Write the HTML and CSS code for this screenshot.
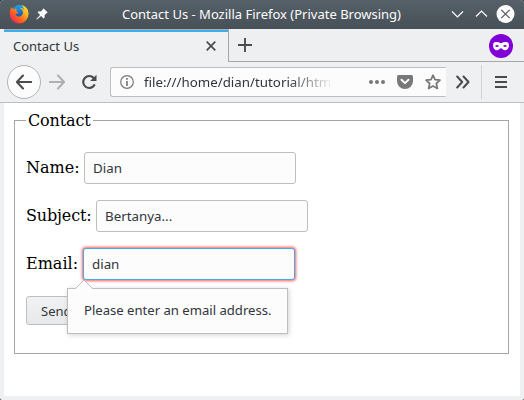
FILE: index.html
```html
<!DOCTYPE html>
<html lang="en">
<head>
<meta charset="utf-8">
<title>Contact Us</title>
<link rel="stylesheet" href="styles.css">
</head>
<body>
<div class="window">
  <header class="titlebar">
    <svg class="firefox" width="20" height="20" viewBox="0 0 20 20">
      <defs>
        <linearGradient id="flame" x1="1" y1="0" x2="0.1" y2="0.9">
          <stop offset="0" stop-color="#fff044"/><stop offset=".35" stop-color="#ffb21c"/><stop offset=".65" stop-color="#ff651f"/><stop offset="1" stop-color="#e9205f"/>
        </linearGradient>
        <linearGradient id="globe" x1="0" y1="0" x2="0" y2="1">
          <stop offset="0" stop-color="#16a6ee"/><stop offset="1" stop-color="#283b95"/>
        </linearGradient>
      </defs>
      <circle cx="10.3" cy="8.5" r="7.6" fill="url(#globe)"/>
      <path d="M2.4 3.2 4.3 5 6.6 4.7 8 5.6 7.2 7.7 9.5 8 8.4 9.4 6.4 10c.7 2.7 4.4 3.5 6.6 1.2 1.4-1.5 1.4-3.5.2-5.1l-2.5-2.4c1.8-.2 3.4.8 4.4 2.1-.2-1.8-1.3-3.5-2.8-4.5C16.500 1.800 19.500 5 19.500 9.800A9.400 9.400 0 0 1 .7 10.500C.6 8 1.200 5 2.400 3.200Z" fill="url(#flame)"/>
    </svg>
    <svg class="pin" width="12" height="12" viewBox="0 0 12 12"><path fill="#fcfcfc" d="M7.400.2 11.800 4.600 10.700 5 8.500 7.200 8.700 9.400 7.700 10.400 5.100 7.900 1 11.600.3 11 4.100 6.900 1.600 4.300 2.600 3.300 4.800 3.500 7 1.300Z"/></svg>
    <h1 class="caption">Contact Us - Mozilla Firefox (Private Browsing)</h1>
    <svg class="controls" width="68" height="20" viewBox="0 0 68 20">
      <path d="m5 7.500 5.500 5.500L16 7.500M29 12.500l5.500-5.500 5.500 5.500" fill="none" stroke="#fcfcfc" stroke-width="1.200"/>
      <circle cx="58.500" cy="10" r="9" fill="#fcfcfc"/>
      <path d="m54.300 5.800 8.400 8.400m0-8.400-8.400 8.400" stroke="#4b545c" stroke-width="1.200"/>
    </svg>
  </header>
  <div class="tabs">
    <div class="tab"><span>Contact Us</span>
      <svg width="10" height="10" viewBox="0 0 10 10"><path d="m.7.7 8.600 8.600m0-8.600L.7 9.300" stroke="#4a4b4d" stroke-width="1.700"/></svg>
    </div>
    <div class="tab-rest">
      <svg width="14" height="14" viewBox="0 0 14 14"><path d="M7 0v14M0 7h14" stroke="#4a4b4d" stroke-width="1.900"/></svg>
      <svg class="mask" width="24" height="24" viewBox="0 0 24 24"><circle cx="12" cy="12" r="12" fill="#8000d7"/><path fill="#fff" fill-rule="evenodd" d="M4.200 10C4.800 7.500 8.500 7.700 12 9.300c3.500-1.600 7.200-1.800 7.800.7.600 3.800-1.300 6.300-3.600 6.300-2.200 0-3-2-4.200-2s-2 2-4.200 2C5.500 16.300 3.600 13.800 4.200 10ZM6 12q2 2.200 4 0-2-2.200-4 0ZM14 12q2 2.200 4 0-2-2.200-4 0Z"/></svg>
    </div>
  </div>
  <nav class="toolbar">
    <div class="back"><svg width="16" height="16" viewBox="0 0 16 16"><path d="M7 1.500.9 8 7 14.500M1 8h14.200" fill="none" stroke="#4a4b4d" stroke-width="2" stroke-linecap="round" stroke-linejoin="round"/></svg></div>
    <svg class="forward" width="16" height="16" viewBox="0 0 16 16"><path d="M9 1.500 15.100 8 9 14.500M15 8H.8" fill="none" stroke="#afb0b2" stroke-width="2" stroke-linecap="round" stroke-linejoin="round"/></svg>
    <svg class="reload" width="16" height="16" viewBox="0 0 16 16"><path d="M13.300 11.200A6 6 0 1 1 12.700 4" fill="none" stroke="#4a4b4d" stroke-width="2.200" stroke-linecap="round"/><path d="M15.500.7V7H9.200Z" fill="#4a4b4d"/></svg>
    <div class="urlbar">
      <svg width="14" height="14" viewBox="0 0 14 14"><circle cx="7" cy="7" r="6.300" fill="none" stroke="#77787a" stroke-width="1.200"/><path d="M7 3v1.800M7 6v5" stroke="#77787a" stroke-width="1.700"/></svg>
      <span class="url">file:///home/dian/tutorial/html</span>
      <svg class="dots" width="16" height="4" viewBox="0 0 16 4"><g fill="#77787a"><circle cx="2" cy="2" r="2"/><circle cx="8" cy="2" r="2"/><circle cx="14" cy="2" r="2"/></g></svg>
      <svg class="pocket" width="16" height="14" viewBox="0 0 16 14"><path d="M1.500 0h13Q16 0 16 1.500V6A8 8 0 0 1 0 6V1.500Q0 0 1.500 0Z" fill="#77787a"/><path d="m4.500 4.700 3.500 3.400 3.500-3.400" fill="none" stroke="#fcfcfc" stroke-width="2" stroke-linecap="round" stroke-linejoin="round"/></svg>
      <svg class="star" width="16" height="16" viewBox="0 0 16 16"><path d="m8 1.200 2 4.500 5 .5-3.700 3.300 1.100 5L8 12l-4.400 2.500 1.100-5L1 6.200l5-.5Z" fill="none" stroke="#77787a" stroke-width="1.700" stroke-linejoin="round"/></svg>
    </div>
    <svg class="more" width="14" height="14" viewBox="0 0 14 14"><path d="m1.200 1.500 5 5.500-5 5.500m6.300-11 5 5.500-5 5.500" fill="none" stroke="#4a4b4d" stroke-width="2" stroke-linecap="round" stroke-linejoin="round"/></svg>
    <div class="menu"><svg width="12" height="12" viewBox="0 0 12 12"><path d="M0 1h12M0 6h12M0 11h12" stroke="#4a4b4d" stroke-width="2"/></svg></div>
  </nav>
  <main class="page">
    <fieldset class="contact">
      <legend>Contact</legend>
      <div class="field name"><label for="name">Name:</label><input id="name" type="text" value="Dian"></div>
      <div class="field subject"><label for="subject">Subject:</label><input id="subject" type="text" value="Bertanya..."></div>
      <div class="field email"><label for="email">Email:</label><input id="email" class="invalid" type="text" value="dian">
        <div class="tooltip">Please enter an email address.
          <svg width="18" height="9" viewBox="0 0 18 9"><path d="M0 9 9 0l9 9" fill="#fcfcfc"/><path d="M0 8.500h.5L9 0l8.500 8.500h.5" fill="none" stroke="#bdbebf"/></svg>
        </div>
      </div>
      <button class="send" type="button">Send</button>
    </fieldset>
  </main>
</div>
</body>
</html>
```
FILE: styles.css
```css
* { box-sizing: border-box; }
body { margin: 0; background: #31363b; font: 13px "Noto Sans", sans-serif; color: #31363b; }
svg { display: block; flex: none; }
.window { width: 524px; height: 400px; display: flex; flex-direction: column; background: #eff0f1; border-radius: 4px 4px 2px 2px; overflow: hidden; }
.titlebar { height: 29px; flex: none; display: flex; align-items: center; padding: 0 9px 1px 9px; background: linear-gradient(#566068, #475057); color: #fcfcfc; }
.pin { margin-left: 7px; }
.caption { flex: 1; min-width: 0; margin: 0; font-size: 13px; font-weight: 400; line-height: 20px; white-space: nowrap; padding-left: 74px; }
.tabs { height: 33px; flex: none; display: flex; padding-left: 4px; }
.tab { width: 224px; display: flex; align-items: center; justify-content: space-between; padding: 0 12px 0 9px; background: linear-gradient(#a9adb0 1px, #3daee9 1px, #3daee9 3px, #eff0f1 3px); }
.tab-rest { flex: 1; display: flex; align-items: center; justify-content: space-between; padding: 0 11px 0 9px; border-left: 1px solid #a7a8aa; border-bottom: 1px solid #a7a8aa; background: #eeeff1; }
.mask { margin-top: 2px; }
.toolbar { height: 41px; flex: none; display: flex; align-items: center; padding-left: 7px; border-bottom: 1px solid #bcbebf; }
.back { width: 34px; height: 34px; display: flex; align-items: center; justify-content: center; border: 1px solid #b3b4b5; border-radius: 50%; background: #fcfcfc; }
.forward { margin-left: 8px; }
.reload { margin-left: 16px; }
.urlbar { width: 336px; height: 30px; margin-left: 13px; display: flex; align-items: center; padding-left: 9px; background: #fcfcfc; border: 1px solid #bdbebf; border-right: 0; border-radius: 3px 1px 1px 3px; }
.url { width: 194px; margin-left: 10px; white-space: nowrap; font-size: 13.33px; mask-image: linear-gradient(to right, #000 145px, transparent 189px); }
.dots { margin-left: 31px; }
.pocket { margin-left: 12px; }
.star { margin-left: 12px; }
.more { margin-left: 10px; }
.menu { height: 34px; margin-left: 11px; display: flex; align-items: center; padding-left: 13px; border-left: 1px solid #d0d1d2; }
.page { flex: 1; margin: 0 4px 4px; padding: 8px 10px; background: #fff; }
.contact { width: 495px; height: 243px; margin: 0; padding: 0 11px; border: 1px solid #a5a5a5; font: 16px "DejaVu Serif", serif; color: #000; }
legend { padding: 0 2px; line-height: 19px; letter-spacing: -.15px; }
.field { display: flex; align-items: center; gap: 5px; height: 32px; margin-bottom: 16px; }
legend + .field { margin-top: 22px; }
.field label { line-height: 19px; padding-bottom: 1px; }
.name label { width: 53px; }
.subject label { width: 65px; letter-spacing: -.15px; }
.email label { width: 52px; }
input { width: 212px; height: 32px; margin: 0; padding: 0 8px; border: 1px solid #bdbebf; border-radius: 3px; background: #fcfcfc; color: #31363b; font: 13.33px "Noto Sans", sans-serif; outline: 0; }
.invalid { border-color: #3daee9; box-shadow: 0 0 3px 1px #ff5a5a; }
.email { position: relative; }
.tooltip { position: absolute; left: 41px; top: 40px; width: 221px; height: 46px; padding-left: 16px; border: 1px solid #bdbebf; background: #fcfcfc; box-shadow: 1px 1px 5px rgba(0, 0, 0, .18); font: 13.1px/43px "Noto Sans", sans-serif; color: #31363b; white-space: nowrap; }
.tooltip svg { position: absolute; left: 7px; top: -9px; }
.send { display: block; width: 70px; height: 29px; margin: 0; padding: 0 14px; text-align: left; border: 1px solid #bdbebf; border-radius: 3px; background: linear-gradient(#f1f2f3, #e7e8e9); color: #31363b; font: 13px "Noto Sans", sans-serif; }
```
